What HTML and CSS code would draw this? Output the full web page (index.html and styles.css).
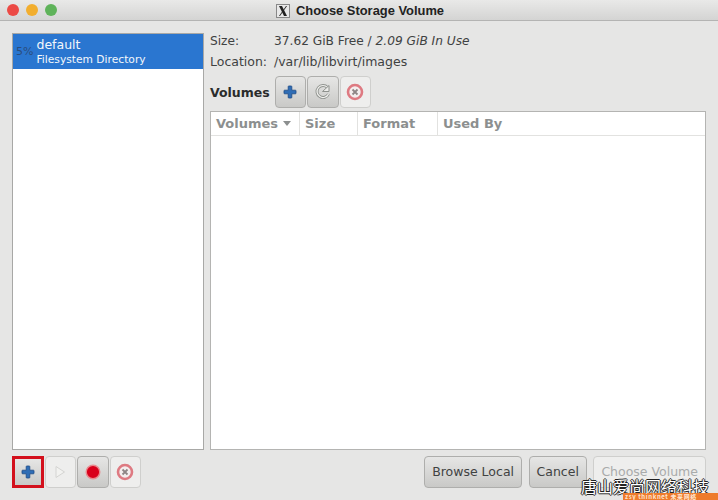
FILE: index.html
```html
<!DOCTYPE html>
<html lang="en">
<head>
    <meta charset="UTF-8">
    <title>Choose Storage Volume</title>
    <link rel="stylesheet" href="styles.css">
</head>
<body>
    <div class="titlebar">
        <div class="lights">
            <span class="light red"></span>
            <span class="light yellow"></span>
            <span class="light green"></span>
        </div>
        <div class="title">
            <svg class="x-icon" width="14" height="14" viewBox="0 0 14 14">
                <rect x="0.5" y="0.5" width="13" height="13" fill="#e8e8e8" stroke="#888"/>
                <path d="M3 2 L6 2 L11 12 L8 12 Z" fill="#222"/>
                <path d="M11 2 L10 2 L3 12 L4 12 Z" fill="#222"/>
            </svg>
            <span>Choose Storage Volume</span>
        </div>
    </div>
    <div class="main">
        <div class="pool-list">
            <div class="pool selected">
                <span class="pool-pct">5%</span>
                <div>
                    <div class="pool-name">default</div>
                    <div class="pool-type">Filesystem Directory</div>
                </div>
            </div>
        </div>
        <div class="detail">
            <div class="info-row size-row"><span class="info-label">Size:</span><span>37.62 GiB Free / <em>2.09 GiB In Use</em></span></div>
            <div class="info-row"><span class="info-label">Location:</span><span>/var/lib/libvirt/images</span></div>
            <div class="vol-bar">
                <b>Volumes</b>
                <div class="tools">
                    <button class="tool shaded">
                        <svg width="16" height="16" viewBox="0 0 16 16"><path d="M6.800 2h2.400a.6.6 0 0 1 .6.6v3.600h3.600a.6.6 0 0 1 .6.6v2.400a.6.6 0 0 1-.6.6H9.800v3.600a.6.6 0 0 1-.6.6H6.800a.6.6 0 0 1-.6-.6V9.800H2.600a.6.6 0 0 1-.6-.6V6.800a.6.6 0 0 1 .6-.6h3.600V2.600a.6.6 0 0 1 .6-.6z" fill="#2f6db5" stroke="#1d4a85" stroke-width=".8"/></svg>
                    </button>
                    <button class="tool shaded">
                        <svg width="20" height="20" viewBox="0 0 20 20"><path d="M15.500 12A6 6 0 1 1 14.500 5.500" fill="none" stroke="#8f928e" stroke-width="3"/><path d="M15.500 12A6 6 0 1 1 14.500 5.500" fill="none" stroke="#f1f1ef" stroke-width="1.200"/><path d="M9.500 9.500h6.500V3.500z" fill="#ececea" stroke="#8f928e"/></svg>
                    </button>
                    <button class="tool">
                        <svg width="20" height="20" viewBox="0 0 20 20"><circle cx="10" cy="10" r="7" fill="#f4eeee" stroke="#de7a82" stroke-width="2.600"/><path d="M7.500 7.500l5 5M12.500 7.500l-5 5" stroke="#8f8686" stroke-width="1.800"/></svg>
                    </button>
                </div>
            </div>
            <div class="table">
                <div class="table-head">
                    <div class="col col-name">Volumes <i class="sort"></i></div>
                    <div class="col col-size">Size</div>
                    <div class="col col-format">Format</div>
                    <div class="col">Used By</div>
                </div>
            </div>
        </div>
    </div>
    <div class="footer">
        <div class="tools">
            <button class="tool shaded marked">
                <svg width="16" height="16" viewBox="0 0 16 16"><path d="M6.800 2h2.400a.6.6 0 0 1 .6.6v3.600h3.600a.6.6 0 0 1 .6.6v2.400a.6.6 0 0 1-.6.6H9.800v3.600a.6.6 0 0 1-.6.6H6.800a.6.6 0 0 1-.6-.6V9.800H2.600a.6.6 0 0 1-.6-.6V6.800a.6.6 0 0 1 .6-.6h3.600V2.600a.6.6 0 0 1 .6-.6z" fill="#2f6db5" stroke="#1d4a85" stroke-width=".8"/></svg>
            </button>
            <button class="tool">
                <svg width="14" height="16" viewBox="0 0 14 16"><path d="M3 2.500L11.500 8 3 13.500z" fill="#f2f2f0" stroke="#d4d4d2"/></svg>
            </button>
            <button class="tool shaded">
                <svg width="20" height="20" viewBox="0 0 20 20"><circle cx="10" cy="10" r="6.800" fill="#d9001b" stroke="#e98a8f" stroke-width="1.400"/></svg>
            </button>
            <button class="tool">
                <svg width="20" height="20" viewBox="0 0 20 20"><circle cx="10" cy="10" r="7" fill="#f4eeee" stroke="#de7a82" stroke-width="2.600"/><path d="M7.500 7.500l5 5M12.500 7.500l-5 5" stroke="#8f8686" stroke-width="1.800"/></svg>
            </button>
        </div>
        <div class="actions">
            <button class="btn shaded">Browse Local</button>
            <button class="btn shaded">Cancel</button>
            <button class="btn disabled">Choose Volume</button>
        </div>
    </div>
    <div class="watermark">唐山爱尚网络科技</div>
    <div class="strip">zsy thinknet 未来网络</div>
</body>
</html>
```

FILE: styles.css
```css
html, body {
    margin: 0;
    height: 100%;
}
body {
    width: 718px;
    height: 500px;
    overflow: hidden;
    position: relative;
    display: flex;
    flex-direction: column;
    background-color: #e6e6e5;
    color: #3f4242;
    font-family: "DejaVu Sans", sans-serif;
    font-size: 13px;
}
button {
    font-family: inherit;
    cursor: pointer;
}

.titlebar {
    height: 20px;
    flex: none;
    display: flex;
    align-items: center;
    position: relative;
    background: linear-gradient(#e9e9e8, #d4d4d3);
    border-bottom: 1px solid #b4b4b3;
}
.lights {
    display: flex;
    gap: 7px;
    padding-left: 7px;
}
.light {
    width: 12px;
    height: 12px;
    border-radius: 50%;
}
.red { background-color: #ec4a45; }
.yellow { background-color: #f2ae2e; }
.green { background-color: #5fb35a; }
.title {
    position: absolute;
    left: 276px;
    top: 3px;
    display: flex;
    align-items: center;
    gap: 6px;
    font-family: "Liberation Sans", sans-serif;
    font-weight: bold;
    font-size: 12.900px;
    color: #222;
}

.main {
    height: 417px;
    flex: none;
    display: flex;
    gap: 6px;
    padding: 12px 12px 0;
}
.pool-list {
    width: 190px;
    background-color: #fff;
    border: 1px solid #a8a8a6;
    flex: none;
}
.pool {
    height: 35px;
    display: flex;
    align-items: center;
    gap: 3px;
    padding-left: 3px;
}
.selected {
    background-color: #2a76d0;
    color: #f2f6fb;
}
.pool-pct {
    font-size: 11px;
    color: #2a4d7d;
}
.pool-name {
    font-size: 12.500px;
    line-height: 16px;
}
.pool-type {
    font-size: 10.700px;
    line-height: 14px;
}

.detail {
    flex: 1;
    display: flex;
    flex-direction: column;
    margin-top: -2px;
}
.info-row {
    display: flex;
    height: 20px;
    align-items: center;
    font-size: 12.500px;
}
.size-row {
    font-size: 12.200px;
}
.info-label {
    width: 64px;
}
.vol-bar {
    display: flex;
    align-items: center;
    gap: 5px;
    margin-top: 5px;
    margin-bottom: 3px;
}
.vol-bar b {
    font-size: 12.500px;
    color: #2a2c2c;
}
.tools {
    display: flex;
    gap: 1px;
}
.tool {
    width: 31.500px;
    height: 32px;
    padding: 0;
    display: flex;
    align-items: center;
    justify-content: center;
    background-color: #eeeeed;
    border: 1px solid #cfcfcd;
    border-radius: 4px;
}
.shaded {
    background: linear-gradient(#e6e6e5, #c9c9c7);
    border-color: #aeaeac;
}
.marked {
    border: 3px solid #d3101c;
    border-radius: 0;
}

.table {
    flex: 1;
    background-color: #fff;
    border: 1px solid #b4b4b2;
}
.table-head {
    display: flex;
    height: 23px;
    border-bottom: 1px solid #e2e2e0;
    font-weight: bold;
    font-size: 13px;
    color: #8c8f8f;
}
.col {
    display: flex;
    align-items: center;
    padding-left: 5px;
    border-right: 1px solid #e2e2e0;
    box-sizing: border-box;
}
.col:last-child {
    border-right: none;
}
.col-name { width: 89px; }
.col-size { width: 58px; }
.col-format { width: 80px; }
.sort {
    width: 0;
    height: 0;
    margin-left: 5px;
    border-left: 4px solid transparent;
    border-right: 4px solid transparent;
    border-top: 5px solid #8c8f8f;
}

.footer {
    flex: 1;
    display: flex;
    justify-content: space-between;
    align-items: flex-start;
    padding: 6px 12px 0;
}
.actions {
    display: flex;
    gap: 6.500px;
}
.btn {
    height: 32px;
    padding: 0 7px 2px;
    font-size: 12.500px;
    color: #3f4242;
    border: 1px solid #aeaeac;
    border-radius: 4px;
}
.disabled {
    background-color: #eeeeed;
    border-color: #cfcfcd;
    color: #a9abab;
}

.watermark {
    position: absolute;
    left: 581px;
    top: 479px;
    font-family: "Noto Sans CJK SC", sans-serif;
    font-size: 16px;
    line-height: 14px;
    color: #fff;
    white-space: nowrap;
    text-shadow: 1px 0 #222, -1px 0 #222, 0 1px #222, 0 -1px #222;
}
.strip {
    position: absolute;
    left: 623px;
    top: 493px;
    width: 95px;
    height: 7px;
    background-color: #ee7b2c;
    color: #ffe6d2;
    font-family: "Noto Sans CJK SC", sans-serif;
    font-weight: bold;
    font-size: 6px;
    line-height: 7px;
    letter-spacing: 0.6px;
    padding-left: 2px;
    box-sizing: border-box;
    white-space: nowrap;
}
```
